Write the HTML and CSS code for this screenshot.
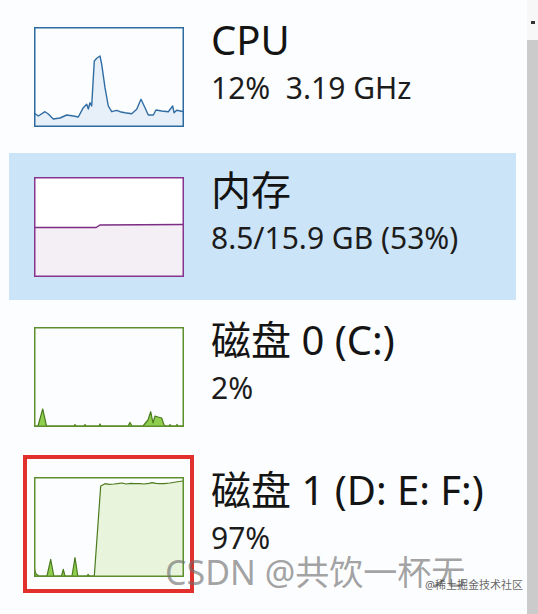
FILE: index.html
```html
<!DOCTYPE html>
<html lang="zh">
<head>
<meta charset="utf-8">
<link rel="stylesheet" href="styles.css">
</head>
<body>
<div class="window">
  <div class="list">
    <div class="row">
      <svg class="graph" width="150" height="100" viewBox="0 0 150 100">
        <path class="cpu-fill" d="M0,86 L4.3,89 L11,84.7 L14.3,87 L19.3,92 L26,91 L32.7,88 L39.3,89 L44.3,90 L49.3,80.7 L52.7,77.3 L54.3,82 L56,75.7 L57.7,79 L60.3,34 L62.7,31.3 L66,29 L67.7,37.3 L71,60.7 L74.3,79 L77.7,84.7 L82.7,83.3 L86,84.7 L91,85.7 L97.7,86.7 L102.7,82.3 L107,72.3 L111,80.7 L114.3,88 L119.3,88 L122,83 L127.7,84 L134.3,84.7 L138.7,79 L140,85.7 L142.7,83.3 L150,84.7 L150,100 L0,100 Z"/>
        <path class="cpu-line" d="M0,86 L4.3,89 L11,84.7 L14.3,87 L19.3,92 L26,91 L32.7,88 L39.3,89 L44.3,90 L49.3,80.7 L52.7,77.3 L54.3,82 L56,75.7 L57.7,79 L60.3,34 L62.7,31.3 L66,29 L67.7,37.3 L71,60.7 L74.3,79 L77.7,84.7 L82.7,83.3 L86,84.7 L91,85.7 L97.7,86.7 L102.7,82.3 L107,72.3 L111,80.7 L114.3,88 L119.3,88 L122,83 L127.7,84 L134.3,84.7 L138.7,79 L140,85.7 L142.7,83.3 L150,84.7"/>
        <rect class="cpu-border" x="0.75" y="0.75" width="148.5" height="98.5"/>
      </svg>
      <div class="info">
        <div class="title">CPU</div>
        <div class="sub">12%&nbsp; 3.19 GHz</div>
      </div>
    </div>

    <div class="row selected">
      <svg class="graph" width="150" height="100" viewBox="0 0 150 100">
        <rect x="0" y="0" width="150" height="100" fill="#ffffff"/>
        <path class="mem-fill" d="M0,50.5 L62,50.5 L66,48 L150,47.5 L150,100 L0,100 Z"/>
        <path class="mem-line" d="M0,50.5 L62,50.5 L66,48 L150,47.5"/>
        <rect class="mem-border" x="0.75" y="0.75" width="148.5" height="98.5"/>
      </svg>
      <div class="info">
        <div class="title">内存</div>
        <div class="sub">8.5/15.9 GB (53%)</div>
      </div>
    </div>

    <div class="row">
      <svg class="graph" width="150" height="100" viewBox="0 0 150 100">
        <path class="disk-spike" d="M4,99 L8.7,82 L12.5,99 Z M40,99 L41,97.5 L42,99 Z M50,99 L51,97.5 L52,99 Z M65,99 L66,97 L67,99 Z M94,99 L96,95.5 L98,99 Z M109,99 L114,93 L116.7,84.7 L119,96 L121,89 L124,90 L127.7,91 L130,98 L132,99 Z M135,99 L136,97.5 L137,99 Z M142,99 L143,97.5 L144,99 Z"/>
        <path class="disk-line" d="M0,99 L4,99 L8.7,82 L12.5,99 L40,99 L41,97.5 L42,99 L50,99 L51,97.5 L52,99 L65,99 L66,97 L67,99 L94,99 L96,95.5 L98,99 L109,99 L114,93 L116.7,84.7 L119,96 L121,89 L124,90 L127.7,91 L130,98 L132,99 L135,99 L136,97.5 L137,99 L142,99 L143,97.5 L144,99 L150,99"/>
        <rect class="disk-border" x="0.75" y="0.75" width="148.5" height="98.5"/>
      </svg>
      <div class="info">
        <div class="title">磁盘 0 (C:)</div>
        <div class="sub">2%</div>
      </div>
    </div>

    <div class="row">
      <div class="mark"></div>
      <svg class="graph" width="150" height="100" viewBox="0 0 150 100">
        <path class="disk-fill" d="M60.3,99 L66.7,9 L71,6.7 L75,7.3 L80,7 L83.3,6.7 L88,6 L92,7 L97,6.3 L100,6.7 L106,6.6 L110,7 L115,6.3 L118,5.7 L122,6.3 L126,6.7 L130,6.7 L136,6 L142,5 L148.7,4 L150,4 L150,100 L60,100 Z"/>
        <path class="disk-spike" d="M0,91 L2,97 L5,99 L0,99 Z M13,99 L16.7,82.3 L19.8,99 Z M27.5,99 L29.3,92.3 L31,99 Z M38,99 L41,80.7 L43.8,99 Z M53,99 L54,97.5 L55.5,99 Z"/>
        <path class="disk-line" d="M0,91 L2,97 L5,99 L13,99 L16.7,82.3 L19.8,99 L27.5,99 L29.3,92.3 L31,99 L38,99 L41,80.7 L43.8,99 L53,99 L54,97.5 L55.5,99 L60.3,99 L66.7,9 L71,6.7 L75,7.3 L80,7 L83.3,6.7 L88,6 L92,7 L97,6.3 L100,6.7 L106,6.6 L110,7 L115,6.3 L118,5.7 L122,6.3 L126,6.7 L130,6.7 L136,6 L142,5 L148.7,4 L150,4"/>
        <rect class="disk-border" x="0.75" y="0.75" width="148.5" height="98.5"/>
      </svg>
      <div class="info">
        <div class="title">磁盘 1 (D: E: F:)</div>
        <div class="sub">97%</div>
      </div>
    </div>
  </div>
  <div class="scrollbar">
    <div class="arrow"></div>
    <div class="thumb"></div>
  </div>
  <div class="watermark">CSDN @共饮一杯无</div>
  <div class="watermark-small">@稀土掘金技术社区</div>
</div>
</body>
</html>
```

FILE: styles.css
```css
html, body {
  margin: 0;
  padding: 0;
  background: #fcfdfe;
}

.window {
  position: relative;
  width: 538px;
  height: 614px;
  display: flex;
  overflow: hidden;
  font-family: "Noto Sans", "Noto Sans CJK SC", sans-serif;
  color: #141414;
}

.list {
  width: 527px;
  display: flex;
  flex-direction: column;
  gap: 3px;
  padding-top: 3px;
}

.row {
  position: relative;
  margin-left: 9px;
  width: 507px;
  height: 147px;
  flex: none;
  display: flex;
  align-items: center;
  gap: 27px;
}

.row.selected {
  background: #cce4f7;
}

.graph {
  display: block;
  margin-left: 25px;
  flex: none;
}

.info {
  align-self: flex-start;
  padding-top: 14px;
  display: flex;
  flex-direction: column;
}

.title {
  font-size: 40px;
  line-height: 46px;
  white-space: nowrap;
}

.sub {
  font-size: 30px;
  line-height: 40px;
  margin-top: 5px;
  color: #1c1c1c;
  white-space: nowrap;
}

.cpu-fill { fill: #e7f0f8; }
.cpu-line { fill: none; stroke: #2f6ca3; stroke-width: 1.4; stroke-linejoin: round; }
.cpu-border { fill: none; stroke: #2c6aa0; stroke-width: 1.5; }

.mem-fill { fill: #f3eff5; }
.mem-line { fill: none; stroke: #7b2c84; stroke-width: 1.4; }
.mem-border { fill: none; stroke: #86348f; stroke-width: 1.5; }

.disk-fill { fill: #e8f4dc; }
.disk-spike { fill: #8fce4e; }
.disk-line { fill: none; stroke: #4b7b1f; stroke-width: 1.2; stroke-linejoin: round; }
.disk-border { fill: none; stroke: #5e8f2d; stroke-width: 1.5; }

.mark {
  position: absolute;
  left: 14px;
  top: 2px;
  width: 163px;
  height: 130px;
  border: 4px solid #e0312d;
}

.scrollbar {
  width: 11px;
  display: flex;
  flex-direction: column;
}

.arrow {
  height: 40px;
  background: #f7f7f7;
  position: relative;
}

.arrow::after {
  content: "";
  position: absolute;
  left: 4px;
  top: 21px;
  width: 4px;
  height: 3px;
  background: #333;
}

.thumb {
  flex: 1;
  background: #cbcbcb;
}

.watermark {
  position: absolute;
  left: 165px;
  top: 551px;
  font-size: 34px;
  line-height: 42px;
  color: rgba(110, 110, 110, 0.65);
  white-space: nowrap;
}

.watermark-small {
  position: absolute;
  left: 425px;
  top: 577px;
  font-size: 11px;
  line-height: 16px;
  color: rgba(60, 60, 60, 0.8);
  white-space: nowrap;
}
```
